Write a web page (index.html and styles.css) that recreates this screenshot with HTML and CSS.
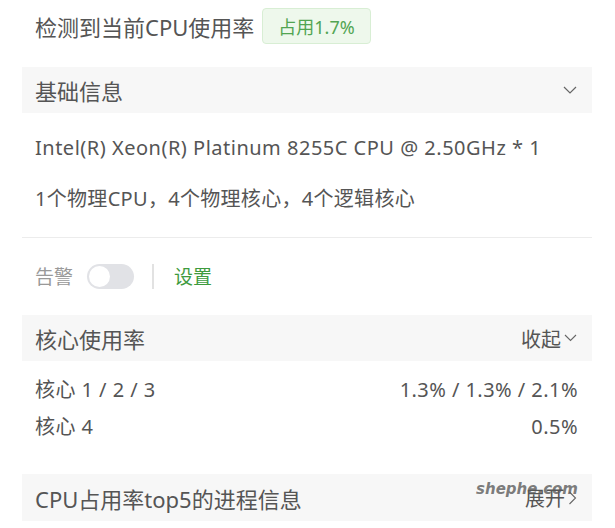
FILE: index.html
```html
<!DOCTYPE html>
<html lang="zh-CN">
<head>
<meta charset="utf-8">
<link rel="stylesheet" href="styles.css">
</head>
<body>
<div class="page">
  <div class="title-row">
    <span class="title">检测到当前CPU使用率</span>
    <span class="badge">占用1.7%</span>
  </div>

  <div class="section-head">
    <span>基础信息</span>
    <svg class="chev" width="14" height="8" viewBox="0 0 14 8"><path d="M1 1 L7 7 L13 1" fill="none" stroke="#666" stroke-width="1.2"/></svg>
  </div>
  <div class="info">
    <p class="line latin">Intel(R) Xeon(R) Platinum 8255C CPU @ 2.50GHz * 1</p>
    <p class="line">1个物理CPU，4个物理核心，4个逻辑核心</p>
  </div>
  <div class="alert-row">
    <span class="alert-label">告警</span>
    <span class="toggle"><span class="knob"></span></span>
    <span class="vsep"></span>
    <span class="setting">设置</span>
  </div>

  <div class="section-head flush">
    <span>核心使用率</span>
    <span class="action">收起<svg width="13" height="8" viewBox="0 0 13 8"><path d="M1 1 L6.5 6.5 L12 1" fill="none" stroke="#666" stroke-width="1.1"/></svg></span>
  </div>
  <div class="cores">
    <div class="core-row"><span>核心 1 / 2 / 3</span><span>1.3% / 1.3% / 2.1%</span></div>
    <div class="core-row"><span>核心 4</span><span>0.5%</span></div>
  </div>

  <div class="section-head last">
    <span>CPU占用率top5的进程信息</span>
    <span class="action">展开<svg width="9" height="14" viewBox="0 0 9 14"><path d="M1.5 1 L7.5 7 L1.5 13" fill="none" stroke="#666" stroke-width="1.1"/></svg></span>
    <span class="watermark">shephe.com</span>
  </div>
</div>
</body>
</html>
```

FILE: styles.css
```css
* { box-sizing: border-box; }
html, body { margin: 0; padding: 0; background: #fff; }
body {
  font-family: "Noto Sans", "Noto Sans CJK SC", sans-serif;
  color: #555;
  width: 615px;
  height: 528px;
  overflow: hidden;
}
.page {
  padding: 8px 23px 0 22px;
}
.title-row {
  display: flex;
  align-items: center;
  gap: 8px;
  padding-left: 13px;
  height: 36px;
}
.title {
  font-size: 22px;
  color: #555;
}
.badge {
  display: inline-flex;
  align-items: center;
  height: 36px;
  padding: 0 15px;
  font-size: 18px;
  color: #52a552;
  background: #eef8ec;
  border: 1px solid #d8eed4;
  border-radius: 4px;
}
.section-head {
  position: relative;
  display: flex;
  align-items: center;
  justify-content: space-between;
  height: 46px;
  margin-top: 23px;
  padding: 0 15px 0 13px;
  background: #f7f7f7;
  font-size: 22px;
  color: #555;
}
.section-head.flush { margin-top: 1px; }
.section-head.last { margin-top: 29px; height: 47px; }
.action {
  display: inline-flex;
  align-items: center;
  gap: 3px;
  font-size: 20px;
  color: #555;
}
.info {
  padding: 0 14px 0 13px;
  border-bottom: 1px solid #ececec;
}
.line {
  margin: 0;
  font-size: 20px;
  line-height: 26px;
  padding-top: 22px;
  letter-spacing: 0.3px;
}
.line.latin { letter-spacing: 0.5px; }
.line + .line { padding-top: 25px; padding-bottom: 25px; }
.alert-row {
  display: flex;
  align-items: center;
  height: 76px;
  padding: 0 13px;
}
.alert-label {
  font-size: 19px;
  color: #999;
}
.toggle {
  position: relative;
  display: inline-block;
  width: 47px;
  height: 25px;
  margin-left: 14px;
  border-radius: 13px;
  background: #e1e2e6;
}
.knob {
  position: absolute;
  left: 2px;
  top: 2px;
  width: 21px;
  height: 21px;
  border-radius: 50%;
  background: #fff;
}
.vsep {
  display: inline-block;
  width: 2px;
  height: 25px;
  background: #e2e2e2;
  margin-left: 18px;
}
.setting {
  margin-left: 20px;
  font-size: 19px;
  color: #3e9b3e;
}
.cores { padding: 10px 14px 0 13px; }
.core-row {
  display: flex;
  justify-content: space-between;
  font-size: 20px;
  line-height: 37px;
  letter-spacing: 0.45px;
}
.watermark {
  position: absolute;
  right: 14px;
  top: 6px;
  font-family: "DejaVu Sans", sans-serif;
  font-weight: bold;
  font-style: italic;
  font-size: 15px;
  color: rgba(90, 90, 90, 0.8);
  pointer-events: none;
}
```
